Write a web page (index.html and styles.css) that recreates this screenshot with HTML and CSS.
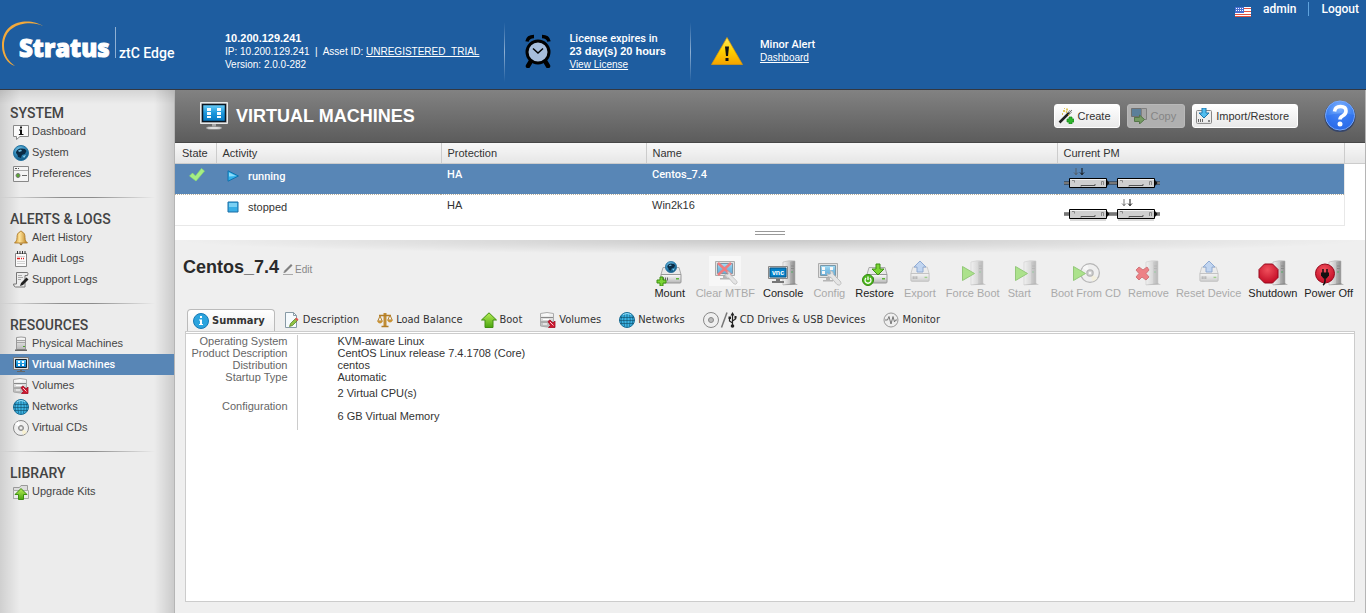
FILE: index.html
```html
<!DOCTYPE html>
<html lang="en">
<head>
<meta charset="utf-8">
<title>Virtual Machines</title>
<link rel="stylesheet" href="styles.css">
</head>
<body>
<svg class="sprite" width="0" height="0" aria-hidden="true">
  <defs>
    <linearGradient id="g-screen" x1="0" y1="0" x2="0" y2="1"><stop offset="0" stop-color="#6fd0fa"/><stop offset=".5" stop-color="#1b97dc"/><stop offset="1" stop-color="#0579c4"/></linearGradient>
    <linearGradient id="g-metal" x1="0" y1="0" x2="0" y2="1"><stop offset="0" stop-color="#fdfdfd"/><stop offset="1" stop-color="#b5b5b5"/></linearGradient>
    <linearGradient id="g-tower" x1="0" y1="0" x2="1" y2="0"><stop offset="0" stop-color="#f2f2f2"/><stop offset=".6" stop-color="#c4c4c4"/><stop offset="1" stop-color="#858585"/></linearGradient>
    <linearGradient id="g-green" x1="0" y1="0" x2="0" y2="1"><stop offset="0" stop-color="#b7ee55"/><stop offset="1" stop-color="#4aa510"/></linearGradient>
    <linearGradient id="g-gold" x1="0" y1="0" x2="1" y2="0"><stop offset="0" stop-color="#d39b33"/><stop offset=".4" stop-color="#ffe39a"/><stop offset="1" stop-color="#b67a17"/></linearGradient>
    <linearGradient id="g-warn" x1="0" y1="0" x2="0" y2="1"><stop offset="0" stop-color="#ffe95c"/><stop offset=".5" stop-color="#ffd000"/><stop offset="1" stop-color="#f5a300"/></linearGradient>
    <radialGradient id="g-globe" cx=".4" cy=".3" r=".7"><stop offset="0" stop-color="#7cc8ea"/><stop offset=".6" stop-color="#2b83b4"/><stop offset="1" stop-color="#13567f"/></radialGradient>
    <radialGradient id="g-help" cx=".5" cy=".25" r=".75"><stop offset="0" stop-color="#82b4ff"/><stop offset=".6" stop-color="#3f82f2"/><stop offset="1" stop-color="#2a68e0"/></radialGradient>
    <radialGradient id="g-red" cx=".45" cy=".3" r=".7"><stop offset="0" stop-color="#f0505c"/><stop offset="1" stop-color="#c40d26"/></radialGradient>

    <symbol id="i-info-bubble" viewBox="0 0 16 16"><path d="M.5 1.500h15v11H7L3.500 15.500 3.500 12.500H.5z" fill="#fafafa" stroke="#888"/><path d="M6 5.500h3V10h1.500v1H5.800v-1H7V6.500H6zM7 2.500h2v2H7z" fill="#111"/></symbol>
    <symbol id="i-globe" viewBox="0 0 16 16"><circle cx="8" cy="8" r="7.500" fill="url(#g-globe)" stroke="#2573a0"/><path d="M3 8c0-3 3-5 6-4.500l3 .5 1.500 2-1.500 3-3 1-1 3-3-1-.5-2z" fill="#0b2c45"/><path d="M5 5.500l3-1 1 1.500-3 1z" fill="#69b7dc"/><path d="M10 11l3-1-2 3z" fill="#8cd3ef"/></symbol>
    <symbol id="i-prefs" viewBox="0 0 16 16"><path d="M.5.500h15v15H.5z" fill="#f4f4f4" stroke="#888"/><path d="M1 4.500h14" stroke="#aaa"/><path d="M2 2.500h2M5 2.500h1" stroke="#555"/><circle cx="5" cy="9.500" r="2" fill="#58a831" stroke="#777"/><path d="M9 9.500h5" stroke="#666"/></symbol>
    <symbol id="i-bell" viewBox="0 0 16 16"><path d="M7 2a1 1 0 012 0c2.500.6 3 3 3 5.500 0 3 1 4 2.500 5.500h-13C3 11.500 4 10.500 4 7.500 4 5 4.500 2.600 7 2z" fill="url(#g-gold)" stroke="#a87320" stroke-width=".8"/><path d="M6 13.500h4l-2 2z" fill="#9b6a1c"/></symbol>
    <symbol id="i-notes" viewBox="0 0 16 16"><path d="M2.500 2.500h11v13h-11z" fill="#fafafa" stroke="#888"/><path d="M4.500 0v3M7 0v3M9.500 0v3M12 0v3" stroke="#333"/><path d="M4 7.500h3M8 7.500h1M10 7.500h1" stroke="#e11b1b" stroke-width="1.500"/><path d="M4 5.500h8M4 10.500h8M4 12.500h8" stroke="#d2d2d2"/></symbol>
    <symbol id="i-script" viewBox="0 0 16 16"><path d="M3.500.5h11q1 1 0 3H12v11.500H2.500q-2-.5-2-3h3z" fill="#ededed" stroke="#777"/><path d="M5 3.500h4M5 5.500h5M5 7.500h3" stroke="#aaa"/><path d="M7 14l1-3 5.500-5.500 2 2L10 13z" fill="#222"/></symbol>
    <symbol id="i-server" viewBox="0 0 16 16"><path d="M3.500 1.500q4.500-1 9 0v12h-9z" fill="url(#g-metal)" stroke="#999"/><path d="M4 4.500h8M4 6.500h8" stroke="#a5a5a5"/><path d="M10 10h2v1h-2z" fill="#4ba32a"/><path d="M2 13.500h12v1.500H2z" fill="#666"/></symbol>
    <symbol id="i-vm" viewBox="0 0 28 28"><path d="M.5.500h27v21H.5z" fill="#cfcfcf" stroke="#e9e9e9"/><path d="M2.500 2.500h23v17h-23z" fill="url(#g-screen)" stroke="#0b1622" stroke-width="1.500"/><path d="M7 6h4v3H7zM7 10h4v3H7zM7 14h4v2H7zM17 6h4v3h-4zM17 10h4v3h-4zM17 14h4v2h-4z" fill="#f4fbff"/><path d="M12 22h4v3h-4z" fill="#aaa"/><ellipse cx="14" cy="26" rx="8" ry="1.600" fill="#ddd" stroke="#777" stroke-width=".6"/></symbol>
    <symbol id="i-vm-small" viewBox="0 0 16 16"><path d="M.5.500h15v12H.5z" fill="#ddd" stroke="#777"/><path d="M2.500 2.500h11v8h-11z" fill="url(#g-screen)" stroke="#0d1d2c"/><path d="M5 4h2v2H5zM5 7h2v2H5zM9 4h2v2H9zM9 7h2v2H9z" fill="#fff"/><path d="M7 13h2v1h3v1H4v-1h3z" fill="#666"/></symbol>
    <symbol id="i-volumes" viewBox="0 0 16 16"><path d="M.5 1.500Q7-.5 13.500 1.500v12.500Q7 16 .5 14z" fill="url(#g-metal)" stroke="#aaa"/><path d="M1 5.500h12M1 10h12" stroke="#888"/><path d="M3 3h6M3 7.500h6M3 12h4" stroke="#fff"/><path d="M8 9.500L10 8l3 3 2-2v6.500H8.500l2-2z" fill="#d01931" stroke="#a30d22" stroke-width=".8"/><path d="M10 10l3.500 3.500" stroke="#fff" stroke-width=".8"/></symbol>
    <symbol id="i-network" viewBox="0 0 16 16"><circle cx="8" cy="8" r="7.500" fill="#3db4e4" stroke="#176c95"/><path d="M1 5.500h14M.5 8.500h15M1.500 11.500h13M8 1v14M3 3.500q-2 4.500 0 9M13 3.500q2 4.500 0 9M5.500 1.500q-1.500 6.500 0 13M10.500 1.500q1.500 6.500 0 13" stroke="#0d4966" stroke-width=".6" fill="none"/><path d="M4 2.500q4-2 8 0" stroke="#9be0f7" fill="none"/></symbol>
    <symbol id="i-cd" viewBox="0 0 16 16"><circle cx="8" cy="8" r="7.500" fill="#efefef" stroke="#888"/><path d="M8 8L2 4a7 7 0 014-2.700z" fill="#fff"/><path d="M8 8l6 4a7 7 0 01-4 2.700z" fill="#f7f0d0"/><circle cx="8" cy="8" r="2.500" fill="#bbb" stroke="#888"/><circle cx="8" cy="8" r="1" fill="#fff"/></symbol>
    <symbol id="i-kits" viewBox="0 0 16 16"><path d="M.5 3.500h6l1.500-2h6.500v13H.5z" fill="#dcdcdc" stroke="#999"/><path d="M.5 6.500h15v8H.5z" fill="#ececec" stroke="#aaa"/><path d="M8 4.500l6 6h-3.500v5h-5v-5H2z" fill="url(#g-green)" stroke="#3d8f10"/></symbol>
    <symbol id="i-wand" viewBox="0 0 16 16"><path d="M1.500 14.500L13 3" stroke="#222" stroke-width="2.500"/><path d="M11 5l3-3" stroke="#eee" stroke-width="2"/><path d="M11 5l3-3" stroke="#555" stroke-width=".8"/><path d="M5 3h2M9 .500v2M8 4.500l1-1M4 6h1M6 0h1M10 7h1" stroke="#d8b624" stroke-width="1.500"/><path d="M11 9h3v2h2v3h-2v2h-3v-2H9v-3h2z" fill="#2fb52c" stroke="#15871a" stroke-width=".7"/></symbol>
    <symbol id="i-copy" viewBox="0 0 16 16"><path d="M.5.500h10v8H.5z" fill="#5c7f9a" stroke="#707070"/><path d="M10.500.5h5v11h-5z" fill="#a5a5a5" stroke="#808080"/><path d="M3 10h4" stroke="#777" stroke-width="2"/><path d="M3.500 9.500h5v-2.500l5 4.500-5 4.500v-2.500h-5z" fill="#759b62" stroke="#55764a"/></symbol>
    <symbol id="i-import" viewBox="0 0 16 16"><path d="M.5 3.500q0-1 1-1h13q1 0 1 1v11q0 .9-1 .9h-13q-1 0-1-.9z" fill="#eee" stroke="#888"/><path d="M2 11h1v3H2zM4 11h1v3H4zM6 11h1v3H6z" fill="#666"/><path d="M12 12h2v2h-2z" fill="#888"/><path d="M6 0h4v5h3L8 10 3 5h3z" fill="#52bdee" stroke="#1c77ae"/></symbol>
    <symbol id="i-help" viewBox="0 0 32 32"><circle cx="16" cy="16.500" r="15.500" fill="#35456b"/><circle cx="16" cy="15.500" r="14.500" fill="url(#g-help)" stroke="#7aacff"/><path d="M2 16Q16 11 30 15 A14 14 0 0 1 2 16z" fill="#2a6cf0" opacity=".5"/><path d="M10.500 11.500q.5-5 6-5t5.500 4.500q0 3-3.500 5-2.500 1.500-2.500 3.500" fill="none" stroke="#fff" stroke-width="3.600"/><circle cx="16" cy="24" r="2.500" fill="#fff"/></symbol>
    <symbol id="i-check" viewBox="0 0 16 14"><path d="M.5 8L3.500 5l3 3L12.500.5 15.500 3 7 13z" fill="#a5ee83" stroke="#8fe06c" stroke-width=".6"/></symbol>
    <symbol id="i-run" viewBox="0 0 12 12"><path d="M1 .800L11.500 6 1 11.200z" fill="#31b1ec" stroke="#1072ad"/><path d="M2 2.500L9 6 2 6.500z" fill="#8bdcf9"/></symbol>
    <symbol id="i-stop" viewBox="0 0 12 12"><path d="M1 1h10v10H1z" fill="#39aee5" stroke="#1b6ca4"/><path d="M2 2h8v4H2z" fill="#7bd0f3"/></symbol>
    <symbol id="i-pencil" viewBox="0 0 10 11"><path d="M1 7l1.500 1.500L9.500 1.500 8 0z" fill="#808080"/><path d="M0 10.500h10" stroke="#aaa"/><path d="M.5 9l.5-2 1.500 1.500z" fill="#777"/></symbol>
    <symbol id="i-clock" viewBox="0 0 28 34"><path d="M3 7.500Q4 2.500 10 2.500M18 2.500q6 0 7 5" stroke="#000" stroke-width="3.500" fill="none"/><path d="M7 27l-3 5M21 27l3 5" stroke="#000" stroke-width="4.500" stroke-linecap="round"/><circle cx="14" cy="18" r="11" fill="#a6bddb" stroke="#000" stroke-width="3"/><path d="M9 14.500l5 4.500 5-4.500" stroke="#000" stroke-width="1.500" fill="none"/></symbol>
    <symbol id="i-warning" viewBox="0 0 32 28"><path d="M16 .500L31.500 27.500H.5z" fill="url(#g-warn)" stroke="#e39b00" stroke-width=".7"/><path d="M14 9.500h4l-1 9.500h-2zM14.500 21h3v3h-3z" fill="#111"/></symbol>
    <symbol id="i-flag" viewBox="0 0 16 10"><path d="M0 0h16v10H0z" fill="#fff"/><path d="M0 1.500h16M0 4.500h16M0 7.500h16M0 9.500h16" stroke="#e3513f"/><path d="M0 0h9v6H0z" fill="#4a6fd0"/><path d="M1 1.500h7M1 3.500h7" stroke="#fff" stroke-dasharray="1 1"/></symbol>
    <symbol id="i-info" viewBox="0 0 16 16"><circle cx="8" cy="8" r="7.500" fill="#2ba4de" stroke="#1679b4"/><path d="M7 3h2v2H7zM6 6.500h3V11h1v1H6v-1h1V7.500H6z" fill="#fff"/></symbol>
    <symbol id="i-doc" viewBox="0 0 16 16"><path d="M1.500.5h8l3 3v12h-11z" fill="#f5fafd" stroke="#879aa5"/><path d="M9.500.5v3h3" fill="none" stroke="#879aa5"/><path d="M5.500 14.500l1-3 5-5 2 2-5 5z" fill="#8fc443" stroke="#52771f" stroke-width=".7"/><path d="M11 7l1.500-1.500 2 2L13 9z" fill="#e35454"/></symbol>
    <symbol id="i-scales" viewBox="0 0 16 16"><path d="M8 1v13" stroke="#c08c34" stroke-width="3"/><path d="M4.500 14.500h7M2 3.500h12" stroke="#b27d26" stroke-width="1.500"/><path d="M3 4L.800 9h4.400zM13 3l-2.200 5h4.400z" stroke="#b6822b" fill="none"/><path d="M0 9h6q-3 5-6 0zM10 8h6q-3 5-6 0z" fill="#c99336"/></symbol>
    <symbol id="i-up" viewBox="0 0 16 16"><path d="M8 .800L15.500 8H12v7.500H4V8H.5z" fill="url(#g-green)" stroke="#418f10"/></symbol>
    <symbol id="i-usb" viewBox="0 0 34 16"><circle cx="8" cy="8" r="7.500" fill="#efefef" stroke="#888"/><circle cx="8" cy="8" r="2.500" fill="#bbb" stroke="#888"/><path d="M18.500 15.500L24 .500" stroke="#777" stroke-width="1.500"/><path d="M29.500 3v11M29.500 11l-3-2V6M29.500 9l3-2V5" stroke="#222" stroke-width="1.200" fill="none"/><path d="M29.500 0l2 3.500h-4zM25.500 4.500H28V7h-2.500zM31.500 4h2v2.500h-2z" fill="#222"/><circle cx="29.500" cy="14" r="1.800" fill="#222"/></symbol>
    <symbol id="i-monitor" viewBox="0 0 16 16"><circle cx="8" cy="8" r="7" fill="#eee" stroke="#999"/><path d="M2 8h2.500L6 4.500 8 12l2-7.500L11.500 10l1-2H14" fill="none" stroke="#777"/></symbol>

    <symbol id="p-drive" viewBox="0 0 22 18"><path d="M3 1.500h16l2 7H1z" fill="#e9e9e9" stroke="#aaa"/><path d="M1 8.500h20v7.500q0 1-1 1H2q-1 0-1-1z" fill="url(#g-metal)" stroke="#999"/><path d="M3 11.500h1v3H3zM5 11.500h1v3H5zM7 11.500h1v3H7z" fill="#666"/><path d="M16 12h3v1.500h-3z" fill="#5db63a"/></symbol>
    <symbol id="p-tower" viewBox="0 0 16 26"><path d="M1 2q6-2 12-1v23l-12 1z" fill="url(#g-tower)" stroke="#bbb" stroke-width=".7"/><path d="M8 2l5-1v23l-5 .500z" fill="#999" opacity=".4"/><path d="M9 6h3M9 8.500h3" stroke="#888"/><path d="M9 12h2" stroke="#55aa66"/><path d="M0 25h16l-3-2z" fill="#777" opacity=".5"/></symbol>
    <symbol id="p-screen" viewBox="0 0 20 20"><path d="M.5.5h19v14H.5z" fill="#d9d9d9" stroke="#777"/><path d="M2.500 2.500h15v10h-15z" fill="url(#g-screen)" stroke="#17516f"/><path d="M8 15h4v2h3v1.500H5V17h3z" fill="#888"/></symbol>
    <symbol id="p-wrench" viewBox="0 0 16 16"><path d="M1 4q0 4 4 4l6 7q3 2 4-1 0-1.500-1-2.500L7.500 5Q7.500 1.500 4 1l1 3-2 1z" fill="#ddd" stroke="#888" stroke-width=".8"/></symbol>
    <symbol id="p-play" viewBox="0 0 13 15"><path d="M.5.500L12.500 7.500.5 14.500z" fill="#76d93c" stroke="#4aa81c"/></symbol>
    <symbol id="t-mount" viewBox="0 0 28 26"><use href="#p-drive" x="4" y="6" width="22" height="18"/><use href="#i-globe" x="9" y="1" width="12" height="12"/><path d="M4 17h3v3h3v3H7v3H4v-3H1v-3h3z" fill="#7bd435" stroke="#3c8f12"/></symbol>
    <symbol id="t-clear" viewBox="0 0 32 30"><path d="M0 0h32v30H0z" fill="#fff"/><use href="#p-screen" x="6" y="5" width="20" height="20"/><path d="M9 7l13 12M22 7L9 19" stroke="#f01f24" stroke-width="2.500"/><use href="#p-wrench" x="15" y="14" width="14" height="15"/></symbol>
    <symbol id="t-console" viewBox="0 0 30 26"><use href="#p-tower" x="14" y="0" width="16" height="26"/><path d="M.5 6.500h19v12H.5z" fill="#d8d8d8" stroke="#888"/><path d="M2 8h16v9H2z" fill="#0583cb" stroke="#075485"/><text x="10" y="15" class="vnc">vnc</text><path d="M8 19h4v2h4v2H4v-2h4z" fill="#777"/></symbol>
    <symbol id="t-config" viewBox="0 0 28 26"><use href="#p-screen" x="3" y="3" width="20" height="20"/><path d="M7 7h3v3H7zM7 11h3v3H7zM15 7h3v3h-3z" fill="#fff"/><use href="#p-wrench" x="11" y="9" width="16" height="17"/></symbol>
    <symbol id="t-restore" viewBox="0 0 28 26"><use href="#p-drive" x="5" y="6" width="22" height="18"/><path d="M15 4h4v5h4l-6 6-6-6h4z" fill="#7bd435" stroke="#3c8f12"/><circle cx="7" cy="20" r="5.500" fill="#4db81f" stroke="#33890f"/><path d="M5 18a3 3 0 104 0M7 16.500V20" stroke="#fff" stroke-width="1.300" fill="none"/></symbol>
    <symbol id="t-export" viewBox="0 0 24 26"><use href="#p-drive" x="2" y="5" width="20" height="18"/><path d="M12 1l6 6h-3v5H9V7H6z" fill="#9dc1f1" stroke="#4272bd"/></symbol>
    <symbol id="t-start" viewBox="0 0 28 26"><use href="#p-tower" x="11" y="0" width="16" height="26"/><use href="#p-play" x="3" y="6" width="13" height="15"/></symbol>
    <symbol id="t-bootcd" viewBox="0 0 28 26"><use href="#i-cd" x="8" y="3" width="20" height="20"/><use href="#p-play" x="1" y="6" width="13" height="15"/></symbol>
    <symbol id="t-remove" viewBox="0 0 28 26"><use href="#p-tower" x="11" y="0" width="16" height="26"/><path d="M2 10l3-3 4 3 4-3 2 3-3 3.500 3 3.500-3 3-4-3-3 3-3-3 3-3.500z" fill="#ed2832" stroke="#b9141d"/></symbol>
    <symbol id="t-shutdown" viewBox="0 0 30 26"><use href="#p-tower" x="14" y="0" width="16" height="26"/><path d="M6.500 4h8l5.500 5.500v8L14.500 23h-8L1 17.500v-8z" fill="url(#g-red)" stroke="#97091c"/></symbol>
    <symbol id="t-power" viewBox="0 0 30 26"><use href="#p-tower" x="14" y="0" width="16" height="26"/><circle cx="11" cy="13.500" r="9.500" fill="url(#g-red)" stroke="#97091c"/><path d="M9 9v4M13 9v4" stroke="#111" stroke-width="1.500"/><path d="M7 12.500h8v3l-2.500 3h-3L7 15.500z" fill="#111"/><path d="M11 18v3q0 3-2 4" stroke="#111" stroke-width="1.500" fill="none"/></symbol>

    <symbol id="pm-node" viewBox="0 0 48 14"><path d="M0 6h5M44 6h4" stroke="#222" stroke-width="3"/><path d="M0 6h5M44 6h4" stroke="#ccc"/><path d="M5.500 1.500h37v9h-37z" fill="#cfcfcf" stroke="#000"/><path d="M6 2.500h36" stroke="#f3f3f3"/><path d="M6 12h36" stroke="#777" opacity=".5"/><path d="M17 9.500V8.500h14V7" stroke="#555" fill="none"/><path d="M8 3.500h2.500v2M37.500 8V4.500h2V8" stroke="#888" fill="none"/><path d="M43 3l2.500 3-2.500 3z" fill="#111"/></symbol>
    <symbol id="pm-arrows" viewBox="0 0 12 8"><path d="M3 0v7M1 4.500l2 2 2-2" stroke="#555" stroke-opacity=".8" fill="none"/><path d="M9 0v7M7 4.500l2 2 2-2" stroke="#111" fill="none"/></symbol>
  </defs>
</svg>

<div class="page">
  <header class="banner">
    <svg class="logo" viewBox="0 0 175 60" role="img" aria-label="Stratus ztC Edge">
      <path d="M43 10C32 2 2 2 2 30c0 10 6 18 13 20C9 46 4 39 4 30 4 7 30 4 43 10z" fill="#f2a93b"/>
      <text x="19" y="41" class="logo-name">Stratus</text>
      <path d="M115.500 11v31" stroke="#8fb0d3"/>
      <text x="119" y="42" class="logo-product">ztC Edge</text>
    </svg>
    <div class="host">
      <strong>10.200.129.241</strong>
      <span>IP: 10.200.129.241 &nbsp;|&nbsp; Asset ID: <a href="#">UNREGISTERED_TRIAL</a></span>
      <span>Version: 2.0.0-282</span>
    </div>
    <div class="notice">
      <svg width="28" height="34"><use href="#i-clock"/></svg>
      <div class="notice-text"><b class="medium">License expires in</b><strong>23 day(s) 20 hours</strong><a href="#">View License</a></div>
    </div>
    <div class="notice">
      <svg width="32" height="28"><use href="#i-warning"/></svg>
      <div class="notice-text"><b class="medium">Minor Alert</b><a href="#">Dashboard</a></div>
    </div>
    <nav class="account">
      <svg width="16" height="10"><use href="#i-flag"/></svg>
      <a href="#">admin</a>
      <a href="#" class="logout">Logout</a>
    </nav>
  </header>

  <div class="body">
    <nav class="sidebar">
      <section>
        <h2>SYSTEM</h2>
        <a href="#"><svg class="icon"><use href="#i-info-bubble"/></svg>Dashboard</a>
        <a href="#"><svg class="icon"><use href="#i-globe"/></svg>System</a>
        <a href="#"><svg class="icon"><use href="#i-prefs"/></svg>Preferences</a>
      </section>
      <section>
        <h2>ALERTS &amp; LOGS</h2>
        <a href="#"><svg class="icon"><use href="#i-bell"/></svg>Alert History</a>
        <a href="#"><svg class="icon"><use href="#i-notes"/></svg>Audit Logs</a>
        <a href="#"><svg class="icon"><use href="#i-script"/></svg>Support Logs</a>
      </section>
      <section>
        <h2>RESOURCES</h2>
        <a href="#"><svg class="icon"><use href="#i-server"/></svg>Physical Machines</a>
        <a href="#" class="current" aria-current="page"><svg class="icon"><use href="#i-vm-small"/></svg>Virtual Machines</a>
        <a href="#"><svg class="icon"><use href="#i-volumes"/></svg>Volumes</a>
        <a href="#"><svg class="icon"><use href="#i-network"/></svg>Networks</a>
        <a href="#"><svg class="icon"><use href="#i-cd"/></svg>Virtual CDs</a>
      </section>
      <section>
        <h2>LIBRARY</h2>
        <a href="#"><svg class="icon"><use href="#i-kits"/></svg>Upgrade Kits</a>
      </section>
    </nav>

    <main class="main">
      <div class="titlebar">
        <svg width="28" height="28"><use href="#i-vm"/></svg>
        <h1>VIRTUAL MACHINES</h1>
        <div class="actions">
          <button type="button"><svg class="icon"><use href="#i-wand"/></svg>Create</button>
          <button type="button" disabled><svg class="icon"><use href="#i-copy"/></svg>Copy</button>
          <button type="button"><svg class="icon"><use href="#i-import"/></svg>Import/Restore</button>
        </div>
        <button type="button" class="help" aria-label="Help"><svg width="32" height="32"><use href="#i-help"/></svg></button>
      </div>

      <table class="grid">
        <thead>
          <tr><th class="c-state">State</th><th class="c-activity">Activity</th><th class="c-protection">Protection</th><th>Name</th><th class="c-pm">Current PM</th><th class="c-end"></th></tr>
        </thead>
        <tbody>
          <tr class="selected">
            <td class="state"><svg width="16" height="14"><use href="#i-check"/></svg></td>
            <td><span class="activity"><svg width="12" height="12"><use href="#i-run"/></svg>running</span></td>
            <td>HA</td><td>Centos_7.4</td>
            <td class="pm"><svg width="98" height="24"><use href="#pm-arrows" x="9" y="0" width="12" height="8"/><use href="#pm-node" x="0" y="9" width="48" height="14"/><use href="#pm-node" x="48" y="9" width="48" height="14"/></svg></td>
            <td class="blank"></td>
          </tr>
          <tr>
            <td class="state"></td>
            <td><span class="activity"><svg width="12" height="12"><use href="#i-stop"/></svg>stopped</span></td>
            <td>HA</td><td>Win2k16</td>
            <td class="pm"><svg width="98" height="24"><use href="#pm-arrows" x="57" y="0" width="12" height="8"/><use href="#pm-node" x="0" y="9" width="48" height="14"/><use href="#pm-node" x="48" y="9" width="48" height="14"/></svg></td>
            <td class="blank"></td>
          </tr>
        </tbody>
      </table>
      <div class="splitter"><span class="grip"></span></div>

      <section class="detail">
        <div class="detail-head">
          <h2>Centos_7.4</h2>
          <a href="#" class="edit"><svg width="10" height="11"><use href="#i-pencil"/></svg>Edit</a>
          <div class="tools">
            <div class="tool-group">
              <button type="button"><svg width="28" height="26"><use href="#t-mount"/></svg>Mount</button>
              <button type="button" disabled><svg width="32" height="30"><use href="#t-clear"/></svg>Clear MTBF</button>
              <button type="button"><svg width="30" height="26"><use href="#t-console"/></svg>Console</button>
              <button type="button" disabled><svg width="28" height="26"><use href="#t-config"/></svg>Config</button>
              <button type="button"><svg width="28" height="26"><use href="#t-restore"/></svg>Restore</button>
              <button type="button" disabled><svg width="24" height="26"><use href="#t-export"/></svg>Export</button>
              <button type="button" disabled><svg width="28" height="26"><use href="#t-start"/></svg>Force Boot</button>
            </div>
            <div class="tool-group tool-group--tight">
              <button type="button" disabled><svg width="28" height="26"><use href="#t-start"/></svg><span class="label-start">Start</span></button>
              <button type="button" disabled><svg width="28" height="26"><use href="#t-bootcd"/></svg>Boot From CD</button>
              <button type="button" disabled><svg width="28" height="26"><use href="#t-remove"/></svg>Remove</button>
              <button type="button" disabled><svg width="24" height="26"><use href="#t-export"/></svg>Reset Device</button>
              <button type="button"><svg width="30" height="26"><use href="#t-shutdown"/></svg>Shutdown</button>
              <button type="button"><svg width="30" height="26"><use href="#t-power"/></svg>Power Off</button>
            </div>
          </div>
        </div>

        <div class="tabs" role="tablist">
          <button type="button" role="tab" aria-selected="true"><svg class="icon"><use href="#i-info"/></svg>Summary</button>
          <button type="button" role="tab"><svg class="icon"><use href="#i-doc"/></svg>Description</button>
          <button type="button" role="tab"><svg class="icon"><use href="#i-scales"/></svg>Load Balance</button>
          <button type="button" role="tab"><svg class="icon"><use href="#i-up"/></svg>Boot</button>
          <button type="button" role="tab"><svg class="icon"><use href="#i-volumes"/></svg>Volumes</button>
          <button type="button" role="tab"><svg class="icon"><use href="#i-network"/></svg>Networks</button>
          <button type="button" role="tab"><svg width="34" height="16"><use href="#i-usb"/></svg>CD Drives &amp; USB Devices</button>
          <button type="button" role="tab"><svg class="icon"><use href="#i-monitor"/></svg>Monitor</button>
        </div>
        <div class="panel" role="tabpanel">
          <table class="facts">
            <tr><th>Operating System</th><td>KVM-aware Linux</td></tr>
            <tr><th>Product Description</th><td>CentOS Linux release 7.4.1708 (Core)</td></tr>
            <tr><th>Distribution</th><td>centos</td></tr>
            <tr><th>Startup Type</th><td>Automatic</td></tr>
            <tr><th>Configuration</th><td><ul><li>2 Virtual CPU(s)</li><li>6 GB Virtual Memory</li></ul></td></tr>
          </table>
        </div>
      </section>
    </main>
  </div>
</div>
</body>
</html>
```
FILE: styles.css
```css
* { box-sizing: border-box; }

body {
  margin: 0;
  font: 11px/13px "Liberation Sans", Arial, sans-serif;
  color: #333;
}

h1, h2 { margin: 0; }
svg { flex: none; display: block; }
.sprite { position: absolute; }
.icon { width: 16px; height: 16px; }
button { font: inherit; color: inherit; cursor: pointer; }

.page {
  min-height: 100vh;
  display: flex;
  flex-direction: column;
}

/* Banner */
.banner {
  display: flex;
  height: 90px;
  color: #fff;
  background: #1e5da0;
  border-bottom: 1px solid #333842;
}
.banner a { color: #fff; }
.logo { width: 175px; height: 60px; margin-top: 16px; }
.logo-name { font: 800 24px "Open Sans", sans-serif; fill: #fff; stroke: #fff; stroke-width: 1px; }
.logo-product { font: 500 14px Roboto, sans-serif; fill: #fff; }
.host, .notice-text {
  display: flex;
  flex-direction: column;
  justify-content: center;
}
.host { padding-top: 13px; margin-left: 50px; font-size: 10px; }
.host strong { font-size: 11px; }
.medium { font-family: Roboto, sans-serif; font-weight: 500; }
.notice {
  display: flex;
  align-items: center;
  gap: 17px;
  padding-top: 13px;
  padding-left: 21px;
  margin-left: 24px;
  background: linear-gradient(transparent, #8fb0d3 50%, transparent) 0 22px / 1px 60px no-repeat;
}
.host + .notice { margin-left: 25px; padding-left: 20px; }
.notice-text a { font-size: 10px; }
.account {
  display: flex;
  align-items: flex-start;
  gap: 12px;
  margin-left: auto;
  padding: 2px 7px 0 0;
  font: 500 12px/14px Roboto, sans-serif;
}
.account a { text-decoration: none; }
.account svg { margin-top: 5px; }
.logout { border-left: 1px solid #5fa3dd; padding-left: 12px; }

/* Sidebar */
.body { flex: 1; display: flex; }
.sidebar {
  width: 175px;
  flex: none;
  padding-top: 15px;
  border-right: 1px solid #b5b5b5;
  background:
    linear-gradient(to bottom, rgba(0, 0, 0, .1), transparent 14px),
    linear-gradient(to right, rgba(0, 0, 0, .12), transparent 20px),
    linear-gradient(to left, rgba(0, 0, 0, .14), transparent 20px),
    #ececec;
}
.sidebar section + section {
  margin-top: 13px;
  padding-top: 14px;
  background: linear-gradient(to right, transparent, #8c8c8c 40%, #8c8c8c 60%, transparent) 0 0 / 155px 1px no-repeat;
}
.sidebar h2 {
  padding-left: 10px;
  font: 500 14px/16px Roboto, sans-serif;
  color: #444;
}
.sidebar a {
  display: flex;
  align-items: center;
  gap: 3px;
  height: 21px;
  padding-left: 13px;
  color: #444;
  text-decoration: none;
}
.sidebar .current {
  color: #fff;
  background: #5886b6;
  font-family: Roboto, sans-serif;
  font-weight: 500;
}

/* Main column */
.main {
  flex: 1;
  min-width: 0;
  display: flex;
  flex-direction: column;
  border-right: 1px solid #b5b5b5;
  background: #efefef;
}
.titlebar {
  display: flex;
  align-items: center;
  height: 53px;
  padding: 0 9px 0 25px;
  background: linear-gradient(#828282, #5c5c5c);
  border-bottom: 1px solid #484848;
}
.titlebar h1 {
  margin-left: 8px;
  font-size: 18px;
  line-height: 20px;
  color: #fff;
}
.actions { display: flex; gap: 7px; margin-left: auto; }
.actions button {
  display: flex;
  align-items: center;
  gap: 4px;
  height: 24px;
  padding: 0 8px 0 3px;
  border: 1px solid #fff;
  border-radius: 3px;
  background: linear-gradient(#fff, #e9e9e9);
}
.actions button:disabled {
  color: #858585;
  border-color: #b9b9b9;
  background: #b0b0b0;
}
.help { margin-left: 26px; padding: 0; border: 0; background: none; }

/* Machine list */
.grid {
  width: 100%;
  table-layout: fixed;
  border-collapse: collapse;
  background: #fff;
}
.grid th {
  height: 20px;
  padding: 2px 6px 0;
  text-align: left;
  font-weight: normal;
  border-right: 1px solid #ccc;
  border-bottom: 1px solid #ccc;
  background: linear-gradient(#f8f8f8, #e6e6e6);
}
.grid th:first-child { padding-left: 7px; }
.grid th:last-child { border-right: 0; }
.c-state { width: 41px; }
.c-activity { width: 225px; }
.c-protection { width: 205px; }
.c-pm { width: 287px; }
.c-end { width: 21px; }
.grid td {
  height: 31px;
  padding: 4px 6px 0;
  vertical-align: top;
  border-bottom: 1px solid #e8e8e8;
}
.grid td.state { padding-left: 14px; }
.grid td.blank { border: 0; border-left: 1px solid #e8e8e8; }
.grid td.pm { padding: 4px 0 0 7px; }
.activity { display: flex; align-items: center; gap: 9px; padding: 2px 0 0 5px; }
.selected td:not(.blank) {
  color: #fff;
  font-family: Roboto, sans-serif;
  font-weight: 500;
  background: #5886b6;
  border-top: 1px dotted #b9b09c;
  border-bottom: 1px dotted #b9b09c;
}
.splitter {
  display: flex;
  justify-content: center;
  height: 14px;
  padding: 5px 0;
  background: #fff;
}
.grip { width: 30px; border: solid #999; border-width: 1px 0; }

/* Detail pane */
.detail {
  flex: 1;
  display: flex;
  flex-direction: column;
  padding: 17px 10px 11px;
  background: radial-gradient(50% 14px at 50% 0, rgba(0, 0, 0, .16), transparent) no-repeat;
}
.detail-head { display: flex; align-items: flex-start; height: 52px; }
.detail-head h2 { font-size: 18px; line-height: 20px; color: #2a2a2a; margin-left: -2px; }
.edit {
  display: flex;
  gap: 2px;
  align-items: center;
  padding-top: 6px;
  margin-left: 4px;
  color: #888;
  font-size: 10px;
  text-decoration: none;
}
.tools { display: flex; gap: 8px; margin-left: auto; padding-right: 2px; }
.tool-group { display: flex; gap: 8px; }
.tool-group--tight { gap: 7px; }
.tools button {
  display: flex;
  flex-direction: column;
  align-items: center;
  justify-content: flex-end;
  gap: 1px;
  height: 43px;
  min-width: 36px;
  padding: 0;
  border: 0;
  background: none;
  color: #222;
  white-space: nowrap;
}
.tools button:disabled { color: #aaa; }
.tools button:disabled svg { opacity: .55; }
.label-start { align-self: flex-start; }
.vnc { font: bold 7px "Liberation Sans", sans-serif; fill: #fff; text-anchor: middle; }

.tabs {
  display: flex;
  padding-left: 2px;
  font: 11px/14px "DejaVu Sans Condensed", "DejaVu Sans", sans-serif;
}
.tabs button {
  display: flex;
  align-items: center;
  gap: 3px;
  height: 22px;
  padding: 1px 9px 0;
  border: 0;
  background: none;
  white-space: nowrap;
}
.tabs button[aria-selected="true"] {
  padding-left: 5px;
  font-weight: bold;
  border: 1px solid #bbb;
  border-bottom: 0;
  border-radius: 4px 4px 0 0;
  background: linear-gradient(#fff, #efefef);
}
.panel {
  flex: 1;
  padding-top: 1px;
  border: 1px solid #ccc;
  border-top: 3px double #ccc;
  background: #fff;
}
.facts { border-collapse: collapse; line-height: 12px; }
.facts th, .facts td { padding: 0; }
.facts th {
  width: 111px;
  padding-right: 9px;
  text-align: right;
  font-weight: normal;
  color: #666;
  border-right: 1px solid #ccc;
}
.facts td { padding-left: 40px; }
.facts ul {
  display: flex;
  flex-direction: column;
  gap: 11px;
  margin: 0;
  padding: 4px 0 8px;
  list-style: none;
}
```
